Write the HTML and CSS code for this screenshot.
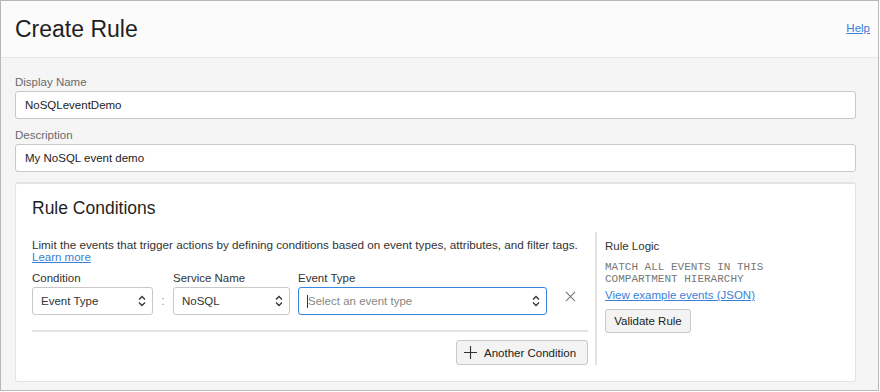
FILE: index.html
```html
<!doctype html>
<html>
<head>
<meta charset="utf-8">
<title>Create Rule</title>
<link rel="stylesheet" href="styles.css">
</head>
<body>
<div class="frame">
    <div class="head">
        <h1>Create Rule</h1>
        <a class="help" href="#">Help</a>
    </div>
    <div class="main">
        <label class="lbl">Display Name</label>
        <div class="field">NoSQLeventDemo</div>
        <label class="lbl lbl2">Description</label>
        <div class="field">My NoSQL event demo</div>

        <div class="panel">
            <h2>Rule Conditions</h2>
            <div class="cols">
                <div class="left">
                    <p class="intro">Limit the events that trigger actions by defining conditions based on event types, attributes, and filter tags.</p>
                    <a class="learn" href="#">Learn more</a>
                    <div class="condRow">
                        <div class="grp g1">
                            <span class="clbl">Condition</span>
                            <div class="sel">Event Type<svg viewBox="0 0 8 12"><path d="M1 4.5 4 1.5 7 4.5M1 7.5 4 10.5 7 7.5"/></svg></div>
                        </div>
                        <span class="colon">:</span>
                        <div class="grp g2">
                            <span class="clbl">Service Name</span>
                            <div class="sel">NoSQL<svg viewBox="0 0 8 12"><path d="M1 4.5 4 1.5 7 4.5M1 7.5 4 10.5 7 7.5"/></svg></div>
                        </div>
                        <div class="grp g3">
                            <span class="clbl">Event Type</span>
                            <div class="sel focus"><span class="caret"></span><span class="ph">Select an event type</span><svg viewBox="0 0 8 12"><path d="M1 4.5 4 1.5 7 4.5M1 7.5 4 10.5 7 7.5"/></svg></div>
                        </div>
                        <svg class="close" viewBox="0 0 12 12"><path d="M1 1 11 11M11 1 1 11"/></svg>
                    </div>
                    <div class="divider"></div>
                    <div class="addRow">
                        <button class="btn addBtn" type="button"><svg viewBox="0 0 14 14"><path d="M7 0V14M0 7H14"/></svg>Another Condition</button>
                    </div>
                </div>
                <div class="right">
                    <span class="rlTitle">Rule Logic</span>
                    <pre class="logic">MATCH ALL EVENTS IN THIS
COMPARTMENT HIERARCHY</pre>
                    <a class="example" href="#">View example events (JSON)</a>
                    <button class="btn valBtn" type="button">Validate Rule</button>
                </div>
            </div>
        </div>
    </div>
</div>
</body>
</html>
```

FILE: styles.css
```css
*{ margin:0; padding:0; box-sizing:border-box}
body{ font-family:"Liberation Sans", Arial, sans-serif; color:#333; background:#fff}
a{ color:#3b80d6}
.frame{ width:879px; height:391px; border:1px solid #b8b8b8; background:#f5f5f5; overflow:hidden}
.head{ height:57px; background:#fbfbfb; border-bottom:1px solid #e6e6e6; display:flex; align-items:center; justify-content:space-between; padding:0 8px 0 14px}
.head h1{ font-size:23px; font-weight:normal; color:#1f1f1f; line-height:28px; margin-top:-1px}
.help{ font-size:11.5px; margin-top:-3px}
.main{ padding:17px 22px 0 14px}
.lbl{ display:block; font-size:11.5px; line-height:15px; color:#6a6a6a; margin-bottom:1px}
.lbl2{ margin-top:9px}
.field{ height:28px; background:#fff; border:1px solid #c8c8c8; border-radius:3px; font-size:11.5px; line-height:26px; padding-left:9px; color:#222}
.panel{ margin-top:10px; background:#fff; border:1px solid #e4e4e4; border-top:2px solid #e4e4e4; border-radius:3px; height:200px; padding:13px 16px 0 16px}
.panel h2{ font-size:17.5px; font-weight:normal; line-height:22px; color:#1f1f1f}
.cols{ display:flex; margin-top:13px}
.left{ width:556px; padding-top:6px}
.intro{ font-size:11.7px; line-height:13px; color:#333; white-space:nowrap}
.learn{ display:block; font-size:11.5px; line-height:13px; width:max-content}
.condRow{ display:flex; align-items:flex-end; margin-top:7px}
.grp{ display:flex; flex-direction:column}
.clbl{ font-size:11.5px; line-height:14px; color:#333; margin-bottom:2px}
.sel{ height:28px; border:1px solid #c8c8c8; border-radius:3px; font-size:11.5px; line-height:26px; padding-left:8px; display:flex; align-items:center; justify-content:space-between; padding-right:6px; color:#333}
.sel svg{ width:8px; height:12px; fill:none; stroke:#333; stroke-width:1.3}
.g1 .sel{ width:121px}
.g2 .sel{ width:117px}
.g3 .sel{ width:249px}
.g3{ margin-left:8px}
.colon{ width:20px; text-align:center; font-size:12px; color:#999; line-height:28px}
.focus{ border-color:#3a85e0; justify-content:flex-start; padding-left:8px}
.focus .caret{ width:1px; height:13px; background:#333}
.focus .ph{ color:#888; flex:1}
.close{ width:11px; height:11px; fill:none; stroke:#777; stroke-width:1.2; margin:0 0 13px 18px}
.divider{ height:2px; background:#e2e2e2; margin-top:15px}
.addRow{ display:flex; justify-content:flex-end; margin-top:8px}
.btn{ font-family:"Liberation Sans", Arial, sans-serif; font-size:11.5px; color:#222; background:#f3f3f3; border:1px solid #c8c8c8; border-radius:3px; display:flex; align-items:center; white-space:nowrap}
.addBtn{ height:25px; width:132px; padding:0 7px}
.addBtn svg{ width:13px; height:13px; fill:none; stroke:#333; stroke-width:1.2; margin-right:7px; flex:none}
.right{ border-left:2px solid #e2e2e2; margin-left:7px; padding:7px 0 0 8px; display:flex; flex-direction:column; align-items:flex-start; height:133px}
.rlTitle{ font-size:11.5px; line-height:14px; color:#333}
.logic{ font-family:"Liberation Mono", "Courier New", monospace; font-size:11px; line-height:12px; color:#777; margin-top:8px}
.example{ font-size:11.5px; line-height:14px; margin-top:3px}
.valBtn{ height:24px; width:86px; justify-content:center; margin-top:7px}
```
